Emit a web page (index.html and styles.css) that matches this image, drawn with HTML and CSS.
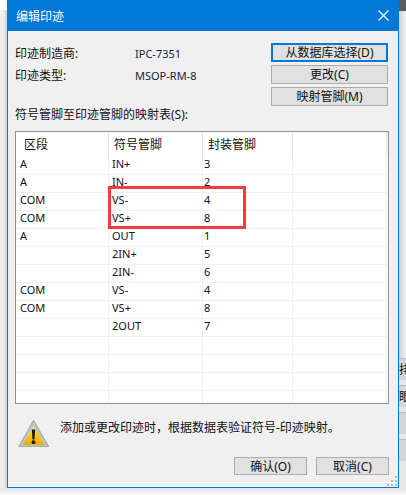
FILE: index.html
```html
<!DOCTYPE html>
<html lang="zh-CN">
<head>
    <meta charset="UTF-8">
    <meta name="viewport" content="width=device-width, initial-scale=1.0">
    <title>编辑印迹</title>
    <link rel="stylesheet" href="styles.css">
</head>
<body>
    <div class="left-strip">
        <div class="left-top"></div>
    </div>

    <div class="dialog">
        <div class="title-bar">
            <span>编辑印迹</span>
            <svg class="close-icon" width="11" height="11" viewBox="0 0 11 11">
                <path d="M0.5 0.5L10.5 10.5M10.5 0.5L0.5 10.5" stroke="#fff" stroke-width="1.2" fill="none"/>
            </svg>
        </div>

        <div class="dialog-body">
            <div class="top-row">
                <div class="info">
                    <div class="info-row"><span class="info-label">印迹制造商:</span><span class="info-value">IPC-7351</span></div>
                    <div class="info-row"><span class="info-label">印迹类型:</span><span class="info-value">MSOP-RM-8</span></div>
                </div>
                <div class="side-buttons">
                    <button class="btn btn-default">从数据库选择(D)</button>
                    <button class="btn">更改(C)</button>
                    <button class="btn btn-tall">映射管脚(M)</button>
                </div>
            </div>

            <div class="table-label">符号管脚至印迹管脚的映射表(S):</div>

            <div class="table-wrap">
                <div class="table-row table-head">
                    <div class="cell">区段</div>
                    <div class="cell">符号管脚</div>
                    <div class="cell">封装管脚</div>
                    <div class="cell"></div>
                </div>
                <div class="table-row"><div class="cell">A</div><div class="cell">IN+</div><div class="cell">3</div><div class="cell"></div></div>
                <div class="table-row"><div class="cell">A</div><div class="cell">IN-</div><div class="cell">2</div><div class="cell"></div></div>
                <div class="table-row"><div class="cell">COM</div><div class="cell">VS-</div><div class="cell">4</div><div class="cell"></div></div>
                <div class="table-row"><div class="cell">COM</div><div class="cell">VS+</div><div class="cell">8</div><div class="cell"></div></div>
                <div class="table-row"><div class="cell">A</div><div class="cell">OUT</div><div class="cell">1</div><div class="cell"></div></div>
                <div class="table-row"><div class="cell"></div><div class="cell">2IN+</div><div class="cell">5</div><div class="cell"></div></div>
                <div class="table-row"><div class="cell"></div><div class="cell">2IN-</div><div class="cell">6</div><div class="cell"></div></div>
                <div class="table-row"><div class="cell">COM</div><div class="cell">VS-</div><div class="cell">4</div><div class="cell"></div></div>
                <div class="table-row"><div class="cell">COM</div><div class="cell">VS+</div><div class="cell">8</div><div class="cell"></div></div>
                <div class="table-row"><div class="cell"></div><div class="cell">2OUT</div><div class="cell">7</div><div class="cell"></div></div>
                <div class="table-row"><div class="cell"></div><div class="cell"></div><div class="cell"></div><div class="cell"></div></div>
                <div class="table-row"><div class="cell"></div><div class="cell"></div><div class="cell"></div><div class="cell"></div></div>
                <div class="table-row"><div class="cell"></div><div class="cell"></div><div class="cell"></div><div class="cell"></div></div>
                <div class="table-row"><div class="cell"></div><div class="cell"></div><div class="cell"></div><div class="cell"></div></div>
                <div class="highlight"></div>
            </div>

            <div class="notice">
                <svg class="warn-icon" width="32" height="30" viewBox="0 0 32 30">
                    <defs>
                        <linearGradient id="warnFill" x1="0" y1="0" x2="0" y2="1">
                            <stop offset="0" stop-color="#ffe680"/>
                            <stop offset="0.5" stop-color="#fccb00"/>
                            <stop offset="1" stop-color="#eea800"/>
                        </linearGradient>
                    </defs>
                    <path d="M15.5 1.5L30.5 27.5H1L15.5 1.5Z" fill="#c4c4c4" stroke="#a8a8a8" stroke-width="1.2" stroke-linejoin="round"/>
                    <path d="M15.5 7L26.5 26H5L15.5 7Z" fill="url(#warnFill)"/>
                    <path d="M13.8 10.5H17.2L16.5 20.5H14.5Z" fill="#1a1a1a"/>
                    <circle cx="15.5" cy="23.2" r="1.9" fill="#1a1a1a"/>
                </svg>
                <div class="notice-text">添加或更改印迹时，根据数据表验证符号-印迹映射。</div>
            </div>

            <div class="footer">
                <button class="btn btn-footer">确认(O)</button>
                <button class="btn btn-footer">取消(C)</button>
            </div>
        </div>

        <svg class="grip" width="11" height="11" viewBox="0 0 11 11">
            <path d="M8 0h2v2H8zM4 4h2v2H4zM8 4h2v2H8zM0 8h2v2H0zM4 8h2v2H4zM8 8h2v2H8z" fill="#b8b8b8"/>
        </svg>
    </div>

    <div class="right-strip">
        <div class="right-top"></div>
        <div class="right-fill"></div>
        <div class="right-cell">排</div>
        <div class="right-cell">眼</div>
        <div class="right-cell"></div>
        <div class="right-cell"></div>
    </div>
</body>
</html>
```

FILE: styles.css
```css
html, body {
    margin: 0;
    padding: 0;
}

body {
    width: 406px;
    height: 495px;
    overflow: hidden;
    display: flex;
    align-items: flex-start;
    background: linear-gradient(#f0f0f0 488px, #e2e2e2 488px, #fbfbfb 495px);
    font-family: "Noto Sans", "Noto Sans CJK SC", sans-serif;
    font-size: 12px;
    color: #111;
}

.left-strip {
    width: 7px;
    height: 488px;
    flex-shrink: 0;
    background: linear-gradient(90deg, #f0f0f0 3px, #d4d4d4);
}

.left-top {
    height: 10px;
    background: #fff;
}

.right-strip {
    width: 7px;
    height: 488px;
    flex-shrink: 0;
    display: flex;
    flex-direction: column;
    background: #e8e8e8;
}

.right-top {
    height: 11px;
    background: #5a5a5a;
}

.right-fill {
    height: 347px;
    background: linear-gradient(90deg, #d0d0d0, #f2f2f2);
}

.right-cell {
    width: 7px;
    height: 21px;
    line-height: 21px;
    margin-bottom: 5px;
    overflow: hidden;
    background: #d6d6d6;
    border-top: 1px solid #bbb;
    white-space: nowrap;
}

.dialog {
    width: 392px;
    height: 488px;
    flex-shrink: 0;
    box-sizing: border-box;
    position: relative;
    display: flex;
    flex-direction: column;
    background: #f0f0f0;
    border: 1px solid #0078d7;
    border-top: 0;
}

.title-bar {
    height: 31px;
    flex-shrink: 0;
    box-sizing: border-box;
    padding: 0 9px 0 8px;
    display: flex;
    justify-content: space-between;
    align-items: center;
    background-color: #0078d7;
    color: #fff;
}

.dialog-body {
    flex: 1;
    padding: 12px 9px 0 7px;
    display: flex;
    flex-direction: column;
}

.top-row {
    display: flex;
    justify-content: space-between;
    height: 63px;
}

.info-row {
    display: flex;
    height: 22px;
    line-height: 22px;
}

.info-label {
    width: 120px;
}

.info-value {
    font-size: 11px;
    color: #1a1a40;
}

.side-buttons {
    display: flex;
    flex-direction: column;
    gap: 3px;
    margin-right: 1px;
}

.btn {
    width: 117px;
    height: 19px;
    padding: 0;
    box-sizing: border-box;
    border: 1px solid #adadad;
    background-color: #e1e1e1;
    color: #111;
    font-family: inherit;
    font-size: 12px;
    line-height: 15px;
}

.btn-default {
    border: 2px solid #0078d7;
}

.btn-tall {
    height: 20px;
}

.table-label {
    height: 17px;
    line-height: 17px;
}

.table-wrap {
    margin-top: 8px;
    height: 273px;
    flex-shrink: 0;
    box-sizing: border-box;
    position: relative;
    overflow: hidden;
    background: #fff;
    border: 1px solid #8b8f96;
    font-size: 11px;
}

.table-row {
    display: grid;
    grid-template-columns: 93px 94px 90px 1fr;
    height: 18px;
    margin-right: 1px;
    box-sizing: border-box;
    border-bottom: 1px solid #f0f0f0;
}

.table-row .cell {
    padding-left: 3px;
    line-height: 14px;
    border-right: 1px solid #f0f0f0;
    white-space: nowrap;
}

.table-row .cell:first-child {
    padding-left: 4px;
}

.table-row .cell:nth-child(3) {
    padding-left: 1px;
}

.table-head {
    height: 25px;
    border-bottom: 0;
    font-size: 12px;
}

.table-head .cell,
.table-head .cell:nth-child(3) {
    padding-left: 5px;
    line-height: 26px;
    border-right: 1px solid #e4e4e4;
}

.table-head .cell:first-child {
    padding-left: 8px;
}

.highlight {
    position: absolute;
    left: 92px;
    top: 54px;
    width: 138px;
    height: 43px;
    box-sizing: border-box;
    border: 3px solid #f5393d;
}

.notice {
    display: flex;
    align-items: flex-start;
    margin-top: 15px;
    padding-left: 3px;
    height: 38px;
}

.warn-icon {
    flex-shrink: 0;
}

.notice-text {
    margin-left: 10px;
    line-height: 17px;
}

.footer {
    display: flex;
    justify-content: flex-end;
    gap: 9px;
}

.btn-footer {
    width: 73px;
    height: 18px;
}

.grip {
    position: absolute;
    right: 0;
    bottom: 0;
}
```
